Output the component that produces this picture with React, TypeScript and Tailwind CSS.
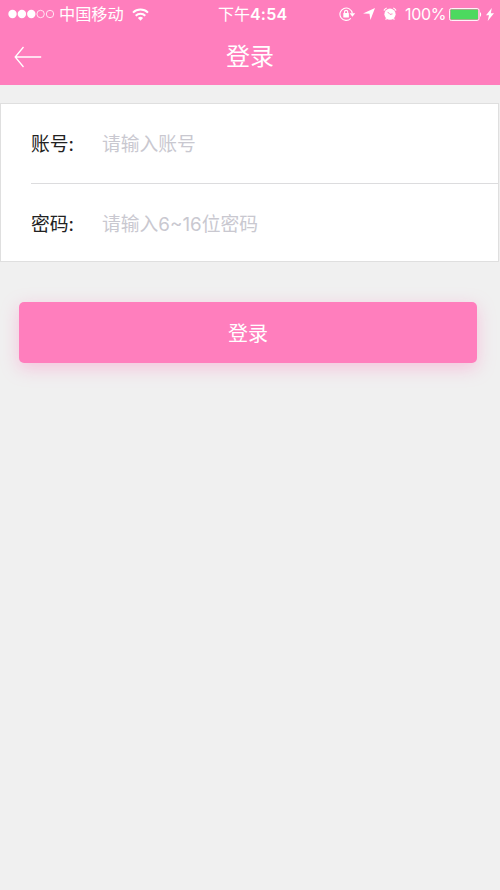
import { useState } from "react";

interface FieldProps {
  label: string;
  placeholder: string;
  type: string;
  value: string;
  onChange: (value: string) => void;
}

const SignalDots = () => (
  <svg width="47" height="10" viewBox="0 0 47 10" fill="none">
    <circle cx="4.5" cy="5" r="4.2" fill="#fff" />
    <circle cx="13.9" cy="5" r="4.2" fill="#fff" />
    <circle cx="23.3" cy="5" r="4.2" fill="#fff" />
    <circle cx="32.6" cy="5" r="3.7" stroke="#fff" strokeWidth="0.8" />
    <circle cx="42" cy="5" r="3.7" stroke="#fff" strokeWidth="0.8" />
  </svg>
);

const WifiIcon = () => (
  <svg width="17" height="13" viewBox="0 0 17 13" fill="none" stroke="#fff">
    <path d="M1 4.6a10.8 10.8 0 0 1 15 0" strokeWidth="2" />
    <path d="M3.7 7.7a7 7 0 0 1 9.6 0" strokeWidth="2" />
    <path d="M8.5 12.8L5.9 10a3.8 3.8 0 0 1 5.2 0z" fill="#fff" stroke="none" />
  </svg>
);

const RotationLockIcon = () => (
  <svg width="17" height="14" viewBox="0 0 17 14" fill="none" stroke="#fff">
    <path d="M11.8 11.3A6.2 6.2 0 1 1 13.3 6.4" strokeWidth="1.1" />
    <path d="M10.6 6.3h5.6l-2.8 3.5z" fill="#fff" stroke="none" />
    <rect x="4.3" y="6.1" width="5.6" height="4.4" rx="0.5" fill="#fff" stroke="none" />
    <path d="M5.5 6.4V5a1.6 1.6 0 0 1 3.2 0v1.4" strokeWidth="1.2" />
  </svg>
);

const LocationIcon = () => (
  <svg width="12" height="12" viewBox="0 0 12 12" fill="#fff">
    <path d="M12 0L7.4 12l-.9-6.2L0 5.5z" />
  </svg>
);

const AlarmIcon = () => (
  <svg width="14" height="14" viewBox="0 0 14 14" fill="none">
    <circle cx="7" cy="7.2" r="5.6" fill="#fff" />
    <path d="M1 3.6A4.6 4.6 0 0 1 3.7 1M10.3 1A4.6 4.6 0 0 1 13 3.6" stroke="#fff" strokeWidth="1.3" />
    <path d="M3.4 11.6l-.8 1M10.6 11.6l.8 1" stroke="#fff" strokeWidth="1.2" />
    <path d="M4.6 4.9L7 7.4l2.5-.5" stroke="#ff7ebd" strokeWidth="0.9" />
  </svg>
);

const BatteryIcon = () => (
  <svg width="34" height="13" viewBox="0 0 34 13" fill="none">
    <rect x="0.5" y="0.5" width="29.5" height="12" rx="1.8" stroke="#fff" strokeOpacity="0.9" />
    <rect x="1.5" y="1.5" width="27.5" height="10" rx="0.8" fill="#4cd95f" />
    <path d="M31 4.2c1.5.3 1.5 4.3 0 4.6z" fill="#fff" />
  </svg>
);

const BoltIcon = () => (
  <svg width="8" height="13" viewBox="0 0 8 13" fill="#fff">
    <path d="M5.8 0L0 7.3h3L1.7 13 8 5.2H4.8z" />
  </svg>
);

const StatusBar = () => (
  <div className="grid h-7 grid-cols-[200px_1fr_165px] text-base leading-7">
    <div className="flex items-center pl-[8px]">
      <SignalDots />
      <span className="ml-[4px] text-[16.2px] whitespace-nowrap">中国移动</span>
      <span className="ml-[8px]">
        <WifiIcon />
      </span>
    </div>
    <div className="flex items-center pl-[18px] whitespace-nowrap">
      下午<span className="font-semibold tracking-[0.2px]">4:54</span>
    </div>
    <div className="flex items-center pl-[4px]">
      <RotationLockIcon />
      <span className="ml-[7px]">
        <LocationIcon />
      </span>
      <span className="ml-[8px]">
        <AlarmIcon />
      </span>
      <span className="ml-[8px] w-[44px] tracking-[-0.3px] whitespace-nowrap">100%</span>
      <BatteryIcon />
      <span className="ml-[3px]">
        <BoltIcon />
      </span>
    </div>
  </div>
);

const Field: React.FC<FieldProps> = ({ label, placeholder, type, value, onChange }) => (
  <label className="flex pt-[26px] pb-[22px] leading-[29px]">
    <span className="w-[71px] text-[#222]">{label}</span>
    <input
      className="h-[29px] flex-1 bg-transparent outline-none placeholder:text-[#c9c8d0]"
      type={type}
      placeholder={placeholder}
      value={value}
      onChange={(e) => onChange(e.target.value)}
    />
  </label>
);

const App = () => {
  const [account, setAccount] = useState("");
  const [password, setPassword] = useState("");

  return (
    <div className="min-h-[890px] w-[500px] bg-[#f0f0f0] font-[Inter,'Noto_Sans_CJK_SC',sans-serif]">
      <header className="h-[85px] bg-[#ff7ebd] text-white">
        <StatusBar />
        <div className="grid h-[57px] grid-cols-[100px_1fr_100px] items-center">
          <button className="pl-[14px]" aria-label="返回">
            <svg width="28" height="22" viewBox="0 0 28 22" fill="none" stroke="#fff" strokeWidth="1.3">
              <path d="M9.5 1L1.2 11l8.3 10M1.2 11h26" />
            </svg>
          </button>
          <h1 className="text-center text-2xl">登录</h1>
        </div>
      </header>

      <form onSubmit={(e) => e.preventDefault()}>
        <div className="mt-[18px] mr-px border border-[#dfdfdf] bg-white pl-[30px] text-[18.8px]">
          <Field
            label="账号:"
            placeholder="请输入账号"
            type="text"
            value={account}
            onChange={setAccount}
          />
          <div className="mt-[2px] h-px bg-[#dcdcde]" />
          <Field
            label="密码:"
            placeholder="请输入6~16位密码"
            type="password"
            value={password}
            onChange={setPassword}
          />
        </div>

        <button
          type="submit"
          className="mt-[40px] ml-[19px] h-[61px] w-[458px] rounded-[5px] bg-[#ff7ebd] pt-[2px] text-xl text-white shadow-[0_5px_18px_rgba(255,126,189,0.4)]"
        >
          登录
        </button>
      </form>
    </div>
  );
};

export default App;
